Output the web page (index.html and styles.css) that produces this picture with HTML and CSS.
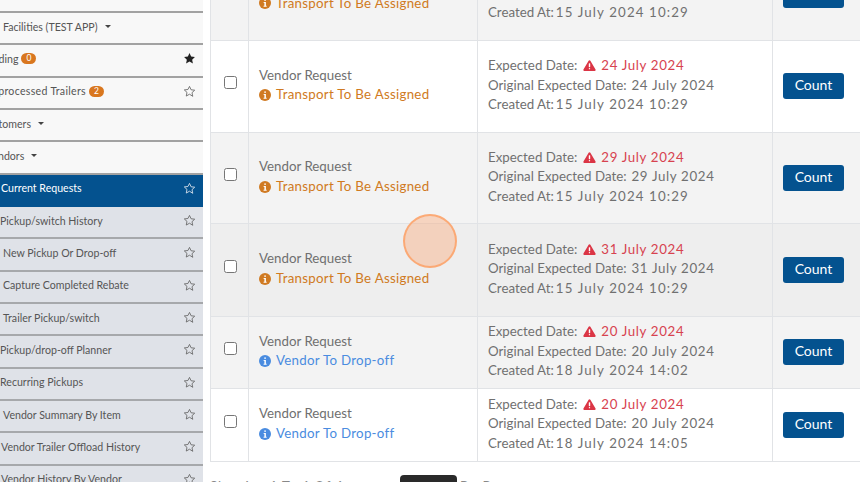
FILE: index.html
```html
<!DOCTYPE html>
<html lang="en">
<head>
<meta charset="utf-8">
<title>Current Requests</title>
<link rel="stylesheet" href="styles.css">
</head>
<body>
<svg class="defs" width="0" height="0" aria-hidden="true">
  <symbol id="star" viewBox="0 0 24 24"><path d="M12 2.6l2.9 6.2 6.7.8-5 4.6 1.4 6.7L12 17l-6 3.4 1.4-6.7-5-4.6 6.7-.8z" fill="none" stroke="currentColor" stroke-width="1.6" stroke-linejoin="round"/></symbol>
  <symbol id="star-solid" viewBox="0 0 24 24"><path d="M12 2l3 6.4 7 .9-5.100 4.800 1.400 6.900L12 17.500 5.700 21l1.400-6.900L2 9.300l7-.9z" fill="currentColor"/></symbol>
  <symbol id="info" viewBox="0 0 16 16"><circle cx="8" cy="8" r="8" fill="currentColor"/><rect x="7" y="3" width="2.200" height="2.200" rx="1" fill="#fff"/><path d="M6.200 6.600h3v5h1v1.300H6.100v-1.300h1.100V7.900h-1z" fill="#fff"/></symbol>
  <symbol id="warn" viewBox="0 0 16 14"><path d="M8 .3c.5 0 .9.300 1.100.7l6.600 11.200c.4.800-.1 1.700-1 1.700H1.300c-.9 0-1.400-.9-1-1.700L6.900 1C7.100.6 7.500.3 8 .3z" fill="currentColor"/><rect x="7.100" y="4.200" width="1.800" height="5" rx=".6" fill="#fff"/><rect x="7.100" y="10.100" width="1.800" height="1.800" rx=".9" fill="#fff"/></symbol>
</svg>
<div class="page">
  <nav class="sidebar">
    <div class="nav-item nav-top"></div>
    <div class="nav-item"><span class="label in-3">Facilities (TEST APP)</span><span class="caret"></span></div>
    <div class="nav-item"><span class="label out-1">Pending</span><span class="badge">0</span><svg class="star star-on"><use href="#star-solid"/></svg></div>
    <div class="nav-item"><span class="label out-2">Unprocessed Trailers</span><span class="badge">2</span><svg class="star"><use href="#star"/></svg></div>
    <div class="nav-item"><span class="label out-3">Customers</span><span class="caret"></span></div>
    <div class="nav-item"><span class="label out-4">Vendors</span><span class="caret"></span></div>
    <div class="nav-item sub active"><span class="label in-1">Current Requests</span><svg class="star"><use href="#star"/></svg></div>
    <div class="nav-item sub"><span class="label in-0">Pickup/switch History</span><svg class="star"><use href="#star"/></svg></div>
    <div class="nav-item sub"><span class="label in-3">New Pickup Or Drop-off</span><svg class="star"><use href="#star"/></svg></div>
    <div class="nav-item sub"><span class="label in-3">Capture Completed Rebate</span><svg class="star"><use href="#star"/></svg></div>
    <div class="nav-item sub"><span class="label in-3">Trailer Pickup/switch</span><svg class="star"><use href="#star"/></svg></div>
    <div class="nav-item sub"><span class="label in-0">Pickup/drop-off Planner</span><svg class="star"><use href="#star"/></svg></div>
    <div class="nav-item sub"><span class="label in-0">Recurring Pickups</span><svg class="star"><use href="#star"/></svg></div>
    <div class="nav-item sub"><span class="label in-3">Vendor Summary By Item</span><svg class="star"><use href="#star"/></svg></div>
    <div class="nav-item sub"><span class="label in-1">Vendor Trailer Offload History</span><svg class="star"><use href="#star"/></svg></div>
    <div class="nav-item sub"><span class="label in-1">Vendor History By Vendor</span><svg class="star"><use href="#star"/></svg></div>
  </nav>
  <main class="main">
    <table class="requests">
      <colgroup><col class="c-check"><col class="c-type"><col class="c-dates"><col class="c-action"></colgroup>
      <tbody>
        <tr class="odd r-first">
          <td class="check"><input type="checkbox" aria-label="Select"></td>
          <td><div>Vendor Request</div><div class="status orange"><svg class="ico"><use href="#info"/></svg>Transport To Be Assigned</div></td>
          <td><div>Expected Date:<svg class="warn"><use href="#warn"/></svg><span class="date red">22 July 2024</span></div><div>Original Expected Date:<span class="date gap">22 July 2024</span></div><div>Created At:<span class="stamp">15 July 2024 10:29</span></div></td>
          <td class="action"><button class="count">Count</button></td>
        </tr>
        <tr class="r-a">
          <td class="check"><input type="checkbox" aria-label="Select"></td>
          <td><div>Vendor Request</div><div class="status orange"><svg class="ico"><use href="#info"/></svg>Transport To Be Assigned</div></td>
          <td><div>Expected Date:<svg class="warn"><use href="#warn"/></svg><span class="date red">24 July 2024</span></div><div>Original Expected Date:<span class="date gap">24 July 2024</span></div><div>Created At:<span class="stamp">15 July 2024 10:29</span></div></td>
          <td class="action"><button class="count">Count</button></td>
        </tr>
        <tr class="odd r-a">
          <td class="check"><input type="checkbox" aria-label="Select"></td>
          <td><div>Vendor Request</div><div class="status orange"><svg class="ico"><use href="#info"/></svg>Transport To Be Assigned</div></td>
          <td><div>Expected Date:<svg class="warn"><use href="#warn"/></svg><span class="date red">29 July 2024</span></div><div>Original Expected Date:<span class="date gap">29 July 2024</span></div><div>Created At:<span class="stamp">15 July 2024 10:29</span></div></td>
          <td class="action"><button class="count">Count</button></td>
        </tr>
        <tr class="hover r-b">
          <td class="check"><input type="checkbox" aria-label="Select"></td>
          <td><div>Vendor Request</div><div class="status orange"><svg class="ico"><use href="#info"/></svg>Transport To Be Assigned</div></td>
          <td><div>Expected Date:<svg class="warn"><use href="#warn"/></svg><span class="date red">31 July 2024</span></div><div>Original Expected Date:<span class="date gap">31 July 2024</span></div><div>Created At:<span class="stamp">15 July 2024 10:29</span></div></td>
          <td class="action"><button class="count">Count</button></td>
        </tr>
        <tr class="odd r-c">
          <td class="check"><input type="checkbox" aria-label="Select"></td>
          <td><div>Vendor Request</div><div class="status blue"><svg class="ico"><use href="#info"/></svg>Vendor To Drop-off</div></td>
          <td><div>Expected Date:<svg class="warn"><use href="#warn"/></svg><span class="date red">20 July 2024</span></div><div>Original Expected Date:<span class="date gap">20 July 2024</span></div><div>Created At:<span class="stamp">18 July 2024 14:02</span></div></td>
          <td class="action"><button class="count">Count</button></td>
        </tr>
        <tr class="r-c">
          <td class="check"><input type="checkbox" aria-label="Select"></td>
          <td><div>Vendor Request</div><div class="status blue"><svg class="ico"><use href="#info"/></svg>Vendor To Drop-off</div></td>
          <td><div>Expected Date:<svg class="warn"><use href="#warn"/></svg><span class="date red">20 July 2024</span></div><div>Original Expected Date:<span class="date gap">20 July 2024</span></div><div>Created At:<span class="stamp">18 July 2024 14:05</span></div></td>
          <td class="action"><button class="count">Count</button></td>
        </tr>
      </tbody>
    </table>
    <div class="pager">
      <span class="pager-text pager-lead">Showing 1 To 6 Of 6</span>
      <span class="page-btn">Next</span>
      <span class="pager-text">Per Page</span>
    </div>
  </main>
</div>
<div class="click-dot"></div>
</body>
</html>
```
FILE: styles.css
```css
* { box-sizing: border-box; }
html, body { margin: 0; height: 100%; overflow: hidden; background: #fff; }
body { font-family: Lato, "Open Sans", sans-serif; font-size: 13.300px; color: #707070; }
.defs { position: absolute; }
.page { display: flex; height: 482px; overflow: hidden; }

.sidebar { width: 203px; flex: none; margin-top: -20px; background: #f8f8f8; overflow: hidden; font-size: 10.600px; color: #555; }
.nav-item { display: flex; align-items: center; height: 32.330px; padding-bottom: 3px; padding-right: 7px; border-bottom: 2px solid #a2a2a2; white-space: nowrap; }
.nav-top { height: 33px; }
.nav-item.sub { background: #dfe2e8; border-bottom-color: #a6a8ab; }
.nav-item.active { background: #04528f; color: #fff; border-bottom-color: #04528f; }
.label { display: block; }
.in-0 { margin-left: 0; }
.in-1 { margin-left: 1px; }
.in-3 { margin-left: 3px; }
.out-1 { margin-left: -19px; }
.out-2 { margin-left: -16px; letter-spacing: .3px; }
.out-3 { margin-left: -19px; }
.out-4 { margin-left: -14px; }
.caret { width: 0; height: 0; margin-left: 7px; border: 3.200px solid transparent; border-top-color: #444; border-bottom: 0; }
.badge { margin-left: 3px; min-width: 15px; height: 11px; padding: 0 3px; border-radius: 6px; background: #d9771f; color: #fff; font-size: 8.500px; line-height: 11px; text-align: center; }
.star { width: 13px; height: 13px; margin-left: auto; margin-right: 0; color: #666; }
.star-on { color: #222; }
.active .star { color: #dfe6ee; }

.main { flex: 1; min-width: 0; padding-left: 7px; overflow: hidden; }
.requests { width: 680px; margin-top: -52px; border-collapse: collapse; table-layout: fixed; }
.c-check { width: 38px; }
.c-type { width: 229px; }
.c-dates { width: 295px; }
.c-action { width: 118px; }
.requests td { padding: 0 0 2px 10px; border: 1px solid #e1e3e6; vertical-align: middle; line-height: 19.500px; white-space: nowrap; }
.requests td.check { padding: 0 0 9px 1px; text-align: center; }
.requests input { width: 13px; height: 13px; margin: 0; vertical-align: middle; }
.requests .action { padding: 0 0 0 10px; }
.r-first { height: 92px; }
.r-a { height: 91.500px; }
.r-b { height: 92.500px; }
.r-c { height: 72.500px; }
.odd td { background: #f3f3f3; }
.hover td { background: #eeeeee; }
.status { display: flex; align-items: center; gap: 5px; letter-spacing: .28px; }
.orange { color: #d07a22; }
.blue { color: #4a8ce0; }
.ico { width: 12px; height: 12px; flex: none; }
.date { letter-spacing: .65px; }
.gap { margin-left: 5px; }
.stamp { margin-left: 2px; letter-spacing: 1.130px; }
.red { color: #d7424f; }
.warn { width: 13px; height: 11px; margin: 0 5px 0 6px; color: #db3545; vertical-align: -1px; }
.count { width: 61px; height: 26px; padding: 0 0 3px; border: 0; border-radius: 3px; background: #04528f; color: #fff; font: inherit; font-size: 14px; }

.pager { display: flex; align-items: flex-start; gap: 3px; height: 40px; padding-top: 13px; }
.pager-text { margin-top: 3px; color: #888; }
.pager-lead { width: 187px; letter-spacing: .8px; }
.page-btn { width: 57px; height: 30px; border-radius: 4px; background: #2a2a2a; color: #fff; text-align: center; line-height: 30px; }

.click-dot { position: absolute; left: 403px; top: 214px; width: 54px; height: 54px; border-radius: 50%; background: rgba(250, 165, 115, .4); border: 2px solid rgba(252, 165, 110, .9); }
```
